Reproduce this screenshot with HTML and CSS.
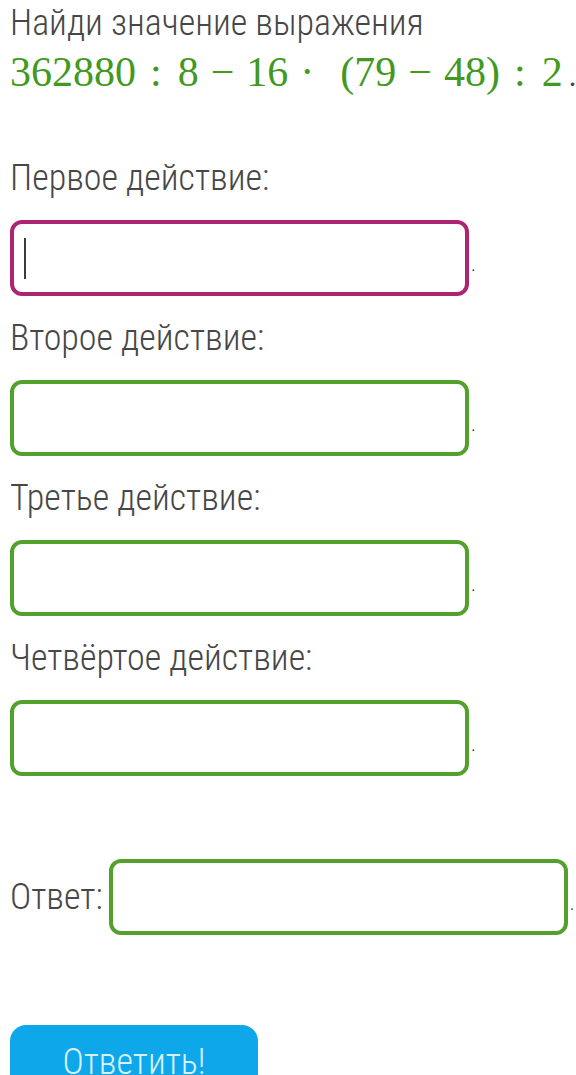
FILE: index.html
```html
<!DOCTYPE html>
<html lang="ru">
<head>
<meta charset="utf-8">
<link rel="stylesheet" href="styles.css">
</head>
<body>
<div class="task">
  <p class="prompt">Найди значение выражения</p>
  <p class="expr">362880<span class="rel">:</span>8<span class="bin">−</span>16<span class="dotop">·</span>(79<span class="bin">−</span>48)<span class="rel">:</span>2<span class="end">.</span></p>

  <div class="step">
    <div class="label">Первое действие:</div>
    <div class="row"><div class="box focus"><span class="caret"></span></div><span class="dot">.</span></div>
  </div>
  <div class="step">
    <div class="label">Второе действие:</div>
    <div class="row"><div class="box"></div><span class="dot">.</span></div>
  </div>
  <div class="step">
    <div class="label">Третье действие:</div>
    <div class="row"><div class="box"></div><span class="dot">.</span></div>
  </div>
  <div class="step">
    <div class="label">Четвёртое действие:</div>
    <div class="row"><div class="box"></div><span class="dot">.</span></div>
  </div>

  <div class="answer">
    <span class="answer-label">Ответ:</span>
    <div class="box"></div><span class="dot">.</span>
  </div>

  <button class="submit">Ответить!</button>
</div>
</body>
</html>
```

FILE: styles.css
```css
html, body {
  margin: 0;
  padding: 0;
  background: #ffffff;
  overflow: hidden;
}
.task {
  padding: 0 0 0 10px;
  font-family: Roboto, "Noto Sans", sans-serif;
  font-weight: 300;
  font-stretch: 85%;
  color: #474747;
}
.prompt {
  margin: 0;
  font-size: 36px;
  line-height: 46px;
}
.expr {
  margin: 0;
  font-family: "Liberation Serif", "DejaVu Serif", serif;
  font-weight: 400;
  font-stretch: normal;
  font-size: 42px;
  line-height: 52px;
  color: #43991f;
  white-space: nowrap;
}
.expr .rel {
  margin: 0 16px 0 14px;
}
.expr .bin {
  margin: 0 12px;
}
.expr .dotop {
  margin: 0 26px 0 12px;
}
.expr .end {
  color: #444;
  font-size: 30px;
  margin-left: 6px;
}
.step:first-of-type {
  margin-top: 56px;
}
.label {
  font-size: 36px;
  line-height: 40px;
}
.row {
  display: flex;
  align-items: center;
  margin: 22px 0;
}
.box {
  box-sizing: border-box;
  width: 459px;
  height: 76px;
  border: 4px solid #54a02c;
  border-radius: 12px;
  display: flex;
  align-items: center;
  padding-left: 10px;
}
.box.focus {
  border-color: #ad2473;
}
.caret {
  width: 2px;
  height: 41px;
  background: #3c3c3c;
}
.dot {
  align-self: flex-end;
  margin: 0 0 22px 2px;
  font-size: 20px;
  line-height: 20px;
  color: #333;
}
.answer {
  display: flex;
  align-items: center;
  margin-top: 83px;
}
.answer-label {
  font-size: 36px;
  line-height: 40px;
  margin-right: 6px;
}
.submit {
  display: block;
  margin-top: 90px;
  width: 248px;
  height: 80px;
  border: none;
  border-radius: 16px;
  background: #0ea8ea;
  color: #d6f1ff;
  font-family: Roboto, "Noto Sans", sans-serif;
  font-weight: 300;
  font-stretch: 85%;
  font-size: 36px;
  padding: 0 0 6px 0;
}
```
